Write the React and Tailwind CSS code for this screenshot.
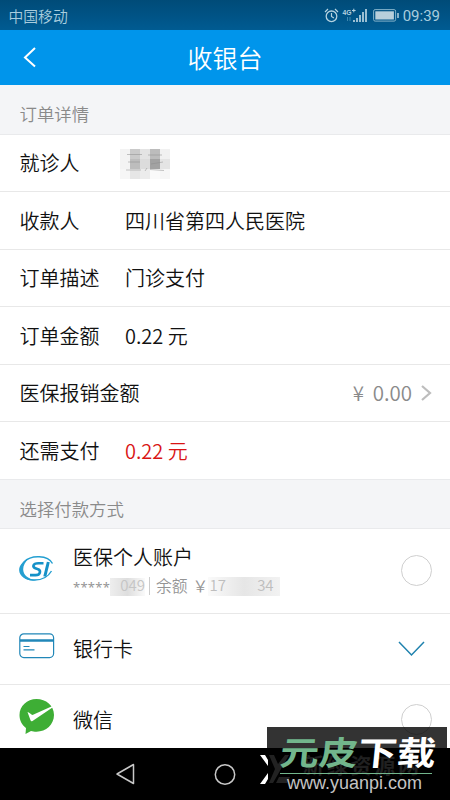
const cjk = "font-['Noto_Sans_CJK_SC',sans-serif] font-[350]";

function Section({ children }) {
  return (
    <div className="h-[49.5px] shrink-0 border-b border-[#e9eaec] bg-[#f4f5f7] px-[19.5px] pt-[16px] text-[17.4px] leading-[26px] text-[#8a8a8a]">
      {children}
    </div>
  );
}

function Row({ label, children, last }) {
  return (
    <div
      className={`flex h-[57.5px] shrink-0 items-center border-b pt-px pl-[19.5px] text-[20px] leading-[28px] ${
        last ? 'border-[#e9eaec]' : 'border-[#e8e8e8]'
      }`}
    >
      <span className="min-w-[105.5px] whitespace-nowrap">{label}</span>
      {children}
    </div>
  );
}

const nameTiles = [
  'bg-[#f3f3f3]', 'bg-[#cacaca]', 'bg-[#e4e4e4]', 'bg-[#bcbcbc]', 'bg-[#f1f1f1]',
  'bg-[#f3f3f3]', 'bg-[#bdbdbd]', 'bg-[#dcdcdc]', 'bg-[#a2a2a2]', 'bg-[#e4e4e4]',
  'bg-[#f6f6f6]', 'bg-[#e6e6e6]', 'bg-[#ececec]', 'bg-[#fafafa]', 'bg-[#f6f6f6]',
];

function NameMosaic() {
  return (
    <div className="relative mt-[2px] -ml-[5px] h-[30px] w-[50px]">
      <div className="grid h-full grid-cols-5 grid-rows-3">
        {nameTiles.map((c, i) => (
          <div key={i} className={c} />
        ))}
      </div>
      <svg className="absolute inset-0" width="50" height="30" fill="none" stroke="#8c8c8c" strokeOpacity=".5">
        <path d="M7 5.5h15M8 13h12M6 21h15M28 6h14M31 15l12-2M30 20.500l14 1M27 19l-2 3" />
      </svg>
    </div>
  );
}

function StatusBar() {
  return (
    <div className="flex h-[30px] shrink-0 items-center justify-between bg-linear-to-b from-[#004b78] to-[#005b92] pr-[10px] pl-[8.5px] text-[#a9cdde]">
      <span className="pt-[1px] text-[14.8px] leading-5">中国移动</span>
      <div className="flex items-center pt-px">
        <svg width="76" height="18" viewBox="0 0 76 18" fill="none" stroke="#b5d2e0">
          <circle cx="7.500" cy="9.300" r="5.300" strokeWidth="1.300" />
          <path d="M7.500 6v3.500l2.400 1.500M1 5l3-3M14 5l-3-3" strokeWidth="1.200" />
          <text x="18.500" y="7.500" fill="#b5d2e0" stroke="none" fontFamily="Liberation Sans" fontWeight="bold" fontSize="7.500" textLength="9" lengthAdjust="spacingAndGlyphs">4G</text>
          <path d="M28 3.500h3.600M29.800 1.700v3.600" strokeWidth="1" />
          <path d="M23.500 10v4M26 10v4" stroke="#3e88ae" />
          <path d="M30 15v-2M33 15v-4M36 15v-7M39 15v-10M42 15V2" strokeWidth="1.700" />
          <rect x="49.600" y="2.600" width="22" height="11.500" rx="1.500" stroke="#83b3ca" />
          <rect x="51.300" y="4.300" width="18.600" height="8.200" fill="#b7cfdb" stroke="none" />
          <path d="M74 6v5" strokeWidth="1.500" />
        </svg>
        <span className="ml-[3px] font-[Roboto,sans-serif] text-[15px] leading-5 font-normal">09:39</span>
      </div>
    </div>
  );
}

function SocialInsuranceLogo() {
  return (
    <svg width="36" height="26" viewBox="0 0 36 26" fill="none">
      <path d="M33.500 7.500C29-1 12-1.500 5 6-2 14 4 24 14 24c8 .4 15-3 18.500-9" stroke="#249fd1" strokeWidth="1.400" />
      <path d="M10 2.500C-1 7-3 17 5 22c3 2 8 3 13 2C3 23 0 11 10 2.500Z" fill="#249fd1" />
      <path d="M24.500 7.300h-5c-6 0-6.500 4-2.500 5.300l1.500.5c4 1.200 3 6-2 6H11" stroke="#1591c8" strokeWidth="2.600" />
      <path d="M29.300 6 25.800 20.500" stroke="#1591c8" strokeWidth="3" />
    </svg>
  );
}

function BankCardIcon() {
  return (
    <svg width="36" height="26" viewBox="0 0 36 26" fill="none" stroke="#2187b8">
      <rect x=".8" y=".8" width="33.800" height="23.800" rx="4" strokeWidth="1.200" />
      <path d="M1 7.500h33.500" strokeWidth="2.300" />
      <path d="M4.500 13.500h6M4.500 16.800h11" strokeWidth="1.200" />
    </svg>
  );
}

function WechatIcon() {
  return (
    <svg width="36" height="37" viewBox="0 0 36 37">
      <path d="M17.500 1C8 1 .5 8 .5 17c0 5.500 2.500 10 6.500 13l-.5 6 5.500-3c1.500.5 3.500.7 5.500.7C27 33.700 35 26.500 35 17S27 1 17.500 1Z" fill="#3eae35" />
      <path d="M8.500 14c1.500 0 4 3 5 3L33.500 8v1.500L13.500 23c-1 .6-1.500.3-2-.8Z" fill="#fff" />
    </svg>
  );
}

function Radio() {
  return <div className="mr-[18.500px] size-[31px] rounded-full border border-[#cfcfcf]" />;
}

function HiddenNumbers() {
  return (
    <div className="flex h-5 items-center whitespace-nowrap text-[15.800px] leading-5 text-[#959595]">
      <span className="w-[37px] pt-[2px] font-['Noto_Sans',sans-serif] text-[13px] leading-4 font-normal tracking-[.25px]">*****</span>
      <span className="mt-[3px] mr-[4px] flex h-[18px] w-[35px] items-center justify-end bg-linear-to-r from-[#eeeeee] via-[#dedede] to-[#fafafa] pb-[5px] text-[15px] leading-4 text-[#c5c5c5]">049</span>
      <span className="h-[18px] w-px bg-[#cccccc]" />
      <span className="ml-[6px]">余额</span>
      <span className="ml-[5px] w-[15px]">￥</span>
      <span className="mt-px flex h-[19px] w-[72px] items-center justify-between bg-linear-to-r from-[#fafafa] via-[#e6e6e6] to-[#f2f2f2] px-[2px] pb-[2px] text-[15px] leading-4 text-[#bebebe]">
        <span>17</span>
        <span className="pr-1">34</span>
      </span>
    </div>
  );
}

function Watermark() {
  return (
    <div className="absolute top-[727px] left-[260px] h-[73px] w-[187px]">
      <div className="absolute inset-y-0 right-0 w-[180px] bg-black/80" />
      <svg className="absolute inset-0" width="187" height="73" viewBox="0 0 187 73">
        <path d="M0 28h5l3 5v6ZM8 46v6l-3 5H0Z" fill="#fff" />
        <path d="M9 28h5l4 9 7-9h4L13 56H9l6-14ZM19 50h11l-3 6H16Z" fill="#222" />
        <text x="43" y="46" fontFamily="Noto Sans CJK SC" fontWeight="bold" fontSize="21" textLength="116" fill="#202020">新绿资源网</text>
        <path d="M20 46.500h152" stroke="#72b68c" strokeWidth="1" />
        <g fontFamily="Noto Sans CJK SC" fontWeight="700" fontSize="33" transform="translate(19 37.500) scale(1.180 1) skewX(-5)">
          <text x="0" y="0" fill="#72b68c">元皮</text>
          <text x="66" y="0" fill="#fff">下载</text>
        </g>
        <text x="27" y="62" fontFamily="Liberation Sans" fontWeight="400" fontSize="18" textLength="135" lengthAdjust="spacingAndGlyphs" fill="#c4c4c4">www.yuanpi.com</text>
      </svg>
    </div>
  );
}

export default function App() {
  return (
    <div className={`relative flex h-[800px] w-[450px] flex-col overflow-hidden bg-white text-[#111111] ${cjk}`}>
      <StatusBar />
      <header className="grid h-[55px] shrink-0 grid-cols-[1fr_auto_1fr] items-center bg-[#0095eb] text-white">
        <svg className="ml-[23px]" width="14" height="21" viewBox="0 0 14 21" fill="none" stroke="white" strokeWidth="2">
          <path d="m12 1-10 9.500 10 9" />
        </svg>
        <h1 className="pb-[2px] text-[25px] leading-9">收银台</h1>
      </header>

      <Section>订单详情</Section>
      <Row label="就诊人"><NameMosaic /></Row>
      <Row label="收款人">四川省第四人民医院</Row>
      <Row label="订单描述">门诊支付</Row>
      <Row label="订单金额">0.22 元</Row>
      <Row label="医保报销金额">
        <span className="ml-auto flex items-center pb-[2px] text-[20.500px] text-[#8a8a8a]">
          <span className="mr-[7px] w-[13px]">¥</span>0.00
          <svg className="mt-px mr-[18px] ml-[8px]" width="12" height="18" viewBox="0 0 12 18" fill="none" stroke="#bdbdbd" strokeWidth="2.200">
            <path d="m2 2 8 7-8 7" />
          </svg>
        </span>
      </Row>
      <Row label="还需支付" last><span className="text-[#d91414]">0.22 元</span></Row>
      <Section>选择付款方式</Section>

      <div className="flex h-[84.500px] shrink-0 items-center border-b border-[#e8e8e8] pl-[18.500px] text-[20px]">
        <div className="w-[54.500px] pb-[3px]"><SocialInsuranceLogo /></div>
        <div className="grow pb-[3px]">
          <div className="mb-[5px] leading-7">医保个人账户</div>
          <HiddenNumbers />
        </div>
        <Radio />
      </div>
      <div className="flex h-[71.500px] shrink-0 items-center border-b border-[#e8e8e8] pl-[19px] text-[20px]">
        <div className="w-[54px] pb-[5px]"><BankCardIcon /></div>
        <span className="grow">银行卡</span>
        <svg className="mr-[25px]" width="27" height="16" viewBox="0 0 27 16" fill="none" stroke="#1f82ae" strokeWidth="1.500">
          <path d="m1 1 12.500 13L26 1" />
        </svg>
      </div>
      <div className="flex h-[62.500px] shrink-0 items-center pt-[7px] pl-[19px] text-[20px]">
        <div className="w-[54px] pb-[6px]"><WechatIcon /></div>
        <span className="grow">微信</span>
        <Radio />
      </div>

      <nav className="h-[53px] shrink-0 bg-black pt-[15px] pl-[115px]">
        <svg width="122" height="24" viewBox="0 0 122 24" fill="none" stroke="#c8c8c8" strokeWidth="1.500">
          <path d="M18.500 1.500v19L2 11Z" strokeLinejoin="round" />
          <circle cx="110" cy="11.500" r="9.700" />
        </svg>
      </nav>
      <Watermark />
    </div>
  );
}
